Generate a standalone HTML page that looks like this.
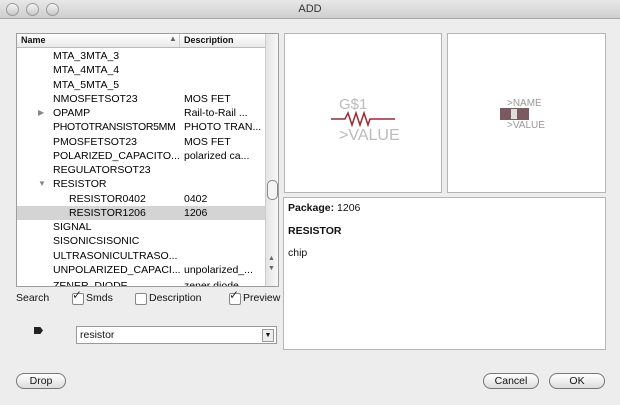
<!DOCTYPE html><html><head><style>
body{margin:0;width:620px;height:405px;background:#ededed;font-family:"Liberation Sans",sans-serif;font-size:10px;color:#111;position:relative;overflow:hidden}
.a{position:absolute}
.tb{left:0;top:0;width:620px;height:18px;background:linear-gradient(#e8e8e8,#cfcfcf);border-bottom:1px solid #a8a8a8;text-align:center;line-height:18px;font-size:11px;color:#333}
.dot{top:3px;width:11px;height:11px;border-radius:50%;background:linear-gradient(#f4f4f4,#c8c8c8);border:1px solid #9a9a9a}
.list{left:16px;top:33px;width:261px;height:252px;background:#fff;border:1px solid #9d9d9d;overflow:hidden}
.hd{left:0;top:0;width:248px;height:13px;border-bottom:1px solid #bbb;background:linear-gradient(#fff,#e9e9e9);font-size:9px;font-weight:bold}
.r{position:absolute;left:0;width:248px;height:14px;line-height:14px;font-size:10.5px;color:#000}
.r span{position:absolute}
.box{background:#fff;border:1px solid #b5b5b5}
.btn{height:14px;border:1px solid #777;border-radius:9px;background:linear-gradient(#fff,#dcdcdc);text-align:center;line-height:14px;font-size:10.5px}
.cb{width:10px;height:10px;border:1px solid #888;background:#fff;border-radius:2px}
</style></head><body>
<div class="a tb">ADD</div>
<div class="a dot" style="left:6px"></div><div class="a dot" style="left:26px"></div><div class="a dot" style="left:46px"></div>
<div class="a list">
<div class="a hd"><span class="a" style="left:4px;top:1px">Name</span><span class="a" style="left:152px;top:0;font-size:8px;color:#666">▲</span><div class="a" style="left:162px;top:0;width:1px;height:13px;background:#ccc"></div><span class="a" style="left:167px;top:1px">Description</span></div>
<div class="a" style="left:248px;top:0;width:13px;height:252px;background:linear-gradient(90deg,#e4e4e4,#fafafa);border-left:1px solid #ccc"></div>
<div class="a" style="left:250px;top:146px;width:9px;height:18px;border-radius:5px;border:1px solid #888;background:#f4f4f4"></div>
<div class="a" style="left:251px;top:220px;font-size:7px;color:#666;line-height:10px">▲<br>▼</div>
<div class="r" style="top:15px"><span style="left:36px">MTA_3MTA_3</span></div>
<div class="r" style="top:29px"><span style="left:36px">MTA_4MTA_4</span></div>
<div class="r" style="top:44px"><span style="left:36px">MTA_5MTA_5</span></div>
<div class="r" style="top:58px"><span style="left:36px">NMOSFETSOT23</span><span style="left:167px">MOS FET</span></div>
<div class="r" style="top:72px"><span style="left:21px;color:#888;font-size:8px">▶</span><span style="left:36px">OPAMP</span><span style="left:167px">Rail-to-Rail ...</span></div>
<div class="r" style="top:86px"><span style="left:36px;letter-spacing:-0.3px">PHOTOTRANSISTOR5MM</span><span style="left:167px">PHOTO TRAN...</span></div>
<div class="r" style="top:101px"><span style="left:36px">PMOSFETSOT23</span><span style="left:167px">MOS FET</span></div>
<div class="r" style="top:115px"><span style="left:36px">POLARIZED_CAPACITO...</span><span style="left:167px">polarized ca...</span></div>
<div class="r" style="top:129px"><span style="left:36px">REGULATORSOT23</span></div>
<div class="r" style="top:143px"><span style="left:21px;color:#888;font-size:8px">▼</span><span style="left:36px">RESISTOR</span></div>
<div class="r" style="top:158px"><span style="left:52px">RESISTOR0402</span><span style="left:167px">0402</span></div>
<div class="r" style="top:172px;background:#d4d4d4"><span style="left:52px">RESISTOR1206</span><span style="left:167px">1206</span></div>
<div class="r" style="top:186px"><span style="left:36px">SIGNAL</span></div>
<div class="r" style="top:200px"><span style="left:36px">SISONICSISONIC</span></div>
<div class="r" style="top:215px"><span style="left:36px">ULTRASONICULTRASO...</span></div>
<div class="r" style="top:229px"><span style="left:36px">UNPOLARIZED_CAPACI...</span><span style="left:167px">unpolarized_...</span></div>
<div class="r" style="top:245px"><span style="left:36px">ZENER_DIODE</span><span style="left:167px">zener diode</span></div>
</div>
<div class="a box" style="left:284px;top:33px;width:156px;height:158px">
<svg width="156" height="158" style="position:absolute;left:0;top:0"><text x="54" y="75" font-family="Liberation Sans" font-size="15" fill="#bbb">G$1</text><path d="M46 85H60l3-6 4 12 4-12 4 12 4-12 4 12 2-6H110" stroke="#9a2a34" stroke-width="1.5" fill="none"/><text x="54" y="106" font-family="Liberation Sans" font-size="16" fill="#bbb">&gt;VALUE</text></svg></div>
<div class="a box" style="left:447px;top:33px;width:157px;height:158px">
<svg width="157" height="158" style="position:absolute;left:0;top:0"><text x="59" y="72" font-family="Liberation Sans" font-size="10" fill="#999">&gt;NAME</text><rect x="52" y="74" width="29" height="12" fill="#7a5a5f"/><rect x="63" y="75" width="6" height="10" fill="#ddd"/><text x="59" y="94" font-family="Liberation Sans" font-size="10" fill="#999">&gt;VALUE</text></svg></div>
<div class="a box" style="left:283px;top:197px;width:321px;height:151px;font-size:10.5px">
<div class="a" style="left:4px;top:4px"><b>Package:</b> 1206</div>
<div class="a" style="left:4px;top:27px"><b>RESISTOR</b></div>
<div class="a" style="left:4px;top:49px">chip</div></div>
<div class="a" style="left:16px;top:292px;font-size:10.5px">Search</div>
<div class="a cb" style="left:72px;top:293px"></div><div class="a" style="left:72px;top:288px;font-size:12px;color:#333">✓</div><div class="a" style="left:86px;top:292px;font-size:10.5px">Smds</div>
<div class="a cb" style="left:135px;top:293px"></div><div class="a" style="left:149px;top:292px;font-size:10.5px">Description</div>
<div class="a cb" style="left:229px;top:293px"></div><div class="a" style="left:229px;top:288px;font-size:12px;color:#333">✓</div><div class="a" style="left:243px;top:292px;font-size:10.5px">Preview</div>
<div class="a" style="left:34px;top:327px;width:9px;height:7px;background:#222;clip-path:polygon(0 0,70% 0,100% 50%,70% 100%,0 100%)"></div>
<div class="a" style="left:76px;top:326px;width:199px;height:16px;background:#fff;border:1px solid #999;font-size:10.5px;line-height:16px"><span style="margin-left:3px">resistor</span><div class="a" style="right:2px;top:2px;width:10px;height:11px;border:1px solid #999;background:#eee;font-size:7px;line-height:11px;text-align:center">▼</div></div>
<div class="a btn" style="left:16px;top:373px;width:48px">Drop</div>
<div class="a btn" style="left:483px;top:373px;width:54px">Cancel</div>
<div class="a btn" style="left:549px;top:373px;width:54px">OK</div>
</body></html>
